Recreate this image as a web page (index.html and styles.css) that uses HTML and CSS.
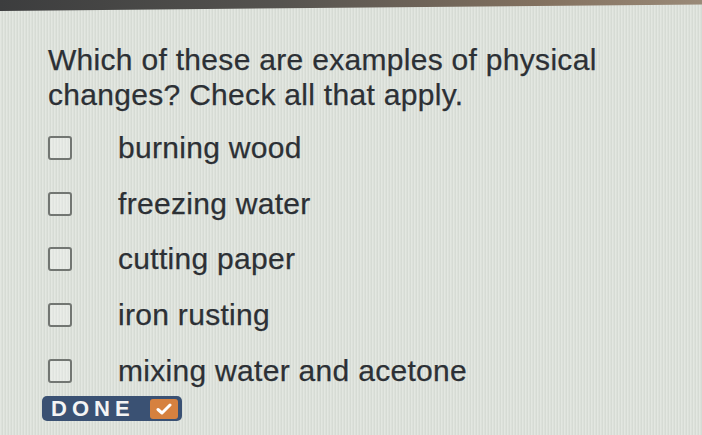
FILE: index.html
```html
<!DOCTYPE html>
<html>
<head>
<meta charset="utf-8">
<link rel="stylesheet" href="styles.css">
</head>
<body>
<div class="topbar"></div>
<main class="quiz">
  <h1 class="question">Which of these are examples of physical changes? Check all that apply.</h1>
  <ul class="options">
    <li class="option"><span class="box"></span><span class="label">burning wood</span></li>
    <li class="option"><span class="box"></span><span class="label">freezing water</span></li>
    <li class="option"><span class="box"></span><span class="label">cutting paper</span></li>
    <li class="option"><span class="box"></span><span class="label">iron rusting</span></li>
    <li class="option"><span class="box"></span><span class="label">mixing water and acetone</span></li>
  </ul>
  <button class="done"><span class="done-text">DONE</span><span class="done-check"><svg width="16" height="14" viewBox="0 0 16 14"><path d="M2 7.5 L6 11 L14 3" fill="none" stroke="#fff" stroke-width="3" stroke-linecap="round" stroke-linejoin="round"/></svg></span></button>
</main>
</body>
</html>
```
FILE: styles.css
```css
html, body {
  margin: 0;
  padding: 0;
  height: 100%;
}
body {
  width: 702px;
  height: 435px;
  overflow: hidden;
  background-color: #dde2db;
  background-image: repeating-linear-gradient(90deg, rgba(255,255,255,0.18) 0px, rgba(255,255,255,0.18) 1px, rgba(0,0,0,0.03) 2px, rgba(0,0,0,0.03) 3px);
  font-family: "Liberation Sans", Arial, sans-serif;
  color: #2c3035;
}
.topbar {
  height: 11px;
  background: linear-gradient(90deg, #3c3d3e 0%, #55534f 40%, #847260 78%, #9a8a78 100%);
  clip-path: polygon(0 0, 100% 0, 100% 40%, 0 100%);
}
.quiz {
  padding: 31px 0 0 48px;
}
.question {
  margin: 0;
  width: 620px;
  font-size: 30px;
  font-weight: normal;
  line-height: 35px;
  letter-spacing: 0.3px;
  -webkit-text-stroke: 0.25px #2c3035;
}
.options {
  list-style: none;
  margin: 8px 0 0 0;
  padding: 0;
  display: flex;
  flex-direction: column;
}
.option {
  display: flex;
  align-items: center;
  height: 55.7px;
}
.box {
  width: 20px;
  height: 20px;
  border: 2px solid #727672;
  border-radius: 3px;
  background: rgba(255,255,255,0.25);
  flex: none;
}
.label {
  margin-left: 46px;
  font-size: 30px;
  letter-spacing: 0.3px;
  line-height: 34px;
  -webkit-text-stroke: 0.25px #2c3035;
}
.done {
  margin: -2px 0 0 -6px;
  display: flex;
  align-items: center;
  justify-content: space-between;
  width: 140px;
  height: 25px;
  padding: 0 4px 0 9px;
  border: none;
  border-radius: 5px;
  background: #3a5173;
  box-sizing: border-box;
}
.done-text {
  color: #f4f4f4;
  font-family: "Liberation Sans", Arial, sans-serif;
  font-weight: bold;
  font-size: 22px;
  letter-spacing: 5px;
  line-height: 25px;
}
.done-check {
  width: 28px;
  height: 20px;
  border-radius: 3px;
  background: #d6813f;
  display: flex;
  align-items: center;
  justify-content: center;
}
```
